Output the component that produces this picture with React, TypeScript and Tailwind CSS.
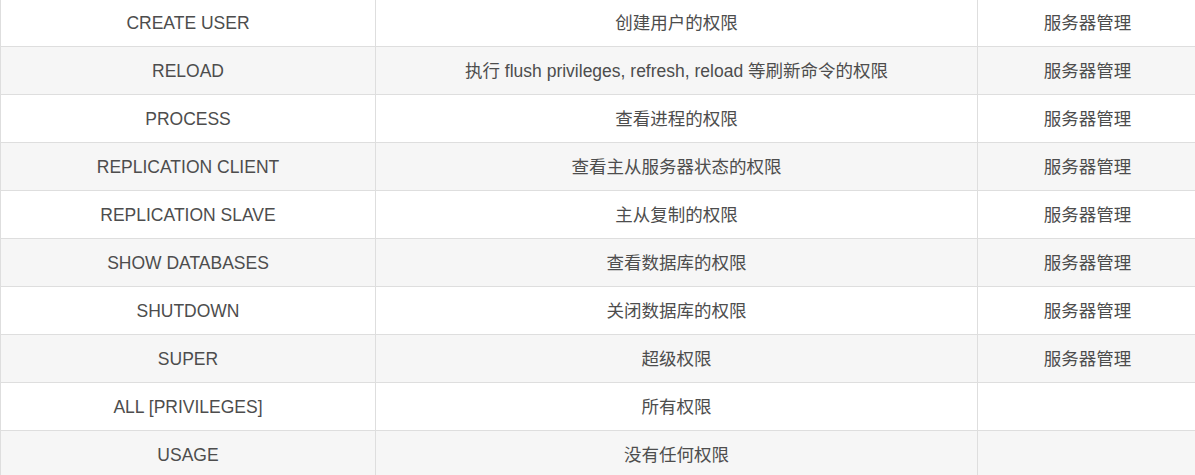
const rows: [string, string, string][] = [
  ['CREATE USER', '创建用户的权限', '服务器管理'],
  ['RELOAD', '执行 flush privileges, refresh, reload 等刷新命令的权限', '服务器管理'],
  ['PROCESS', '查看进程的权限', '服务器管理'],
  ['REPLICATION CLIENT', '查看主从服务器状态的权限', '服务器管理'],
  ['REPLICATION SLAVE', '主从复制的权限', '服务器管理'],
  ['SHOW DATABASES', '查看数据库的权限', '服务器管理'],
  ['SHUTDOWN', '关闭数据库的权限', '服务器管理'],
  ['SUPER', '超级权限', '服务器管理'],
  ['ALL [PRIVILEGES]', '所有权限', ''],
  ['USAGE', '没有任何权限', ''],
]

export default function App() {
  return (
    <div className="w-[1195px] h-[475px] overflow-hidden bg-white">
      <table
        className="-mt-[2px] w-[1197px] table-fixed border-collapse text-[17.5px] text-[#4d4d4d]"
        style={{ fontFamily: '"Liberation Sans", Arial, "Noto Sans CJK SC", sans-serif' }}
      >
        <colgroup>
          <col className="w-[375px]" />
          <col className="w-[602px]" />
          <col className="w-[220px]" />
        </colgroup>
        <tbody>
          {rows.map((r, i) => (
            <tr key={r[0]} className={i % 2 === 1 ? 'bg-[#f6f6f6]' : 'bg-white'}>
              {r.map((c, j) => (
                <td key={j} className="h-[48px] border border-[#dedede] px-2 text-center align-middle leading-[24px]">
                  {c}
                </td>
              ))}
            </tr>
          ))}
        </tbody>
      </table>
    </div>
  )
}
